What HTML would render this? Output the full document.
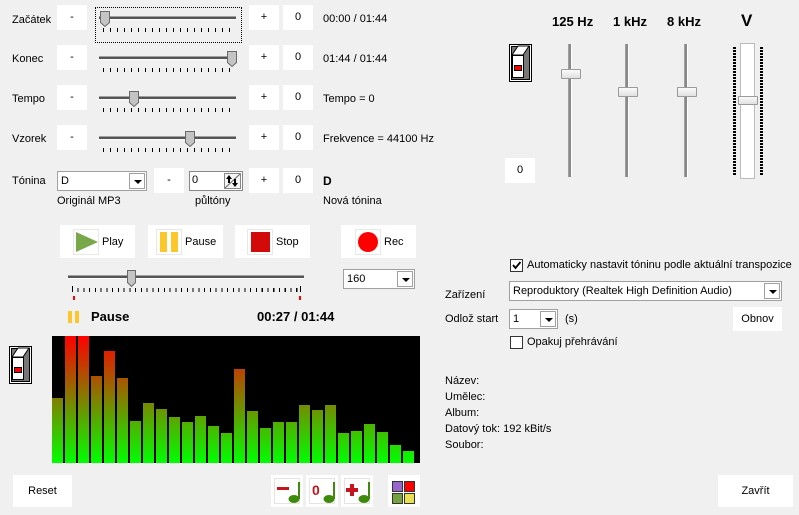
<!DOCTYPE html>
<html><head><meta charset="utf-8"><style>
*{margin:0;padding:0;box-sizing:border-box}
body{width:799px;height:515px;background:#f0f0f0;font-family:"Liberation Sans",sans-serif;font-size:11px;color:#000;position:relative;overflow:hidden}
.a{position:absolute}
.t{position:absolute;white-space:nowrap;line-height:12px}
.btn{position:absolute;background:#fff;text-align:center}
.box{position:absolute;background:#fff;text-align:center;width:30px;height:25px;line-height:25px}
.trk{position:absolute;height:4px;border-top:1px solid #a0a0a0;border-bottom:1px solid #fff;background:#555;}
.ticks{position:absolute;height:4px;background:repeating-linear-gradient(90deg,#000 0 1px,transparent 1px 7px)}
.thumb{position:absolute;width:10px;height:18px}
.combo{position:absolute;background:#fff;border:1px solid #a0a0a0;height:20px;line-height:18px;padding-left:3px}
.arr{position:absolute;right:1px;top:1px;width:16px;height:16px;border:1px solid #a0a0a0;background:#fff}
.arr:after{content:"";position:absolute;left:4px;top:6px;border-left:4px solid transparent;border-right:4px solid transparent;border-top:4px solid #000}
.vt{position:absolute;width:4px;background:#888;border-left:1px solid #a0a0a0;border-right:1px solid #fff}
.vth{position:absolute;width:20px;height:10px;background:linear-gradient(#fafafa,#e0e0e0);border:1px solid #9a9a9a;border-radius:1px}
.bar{position:absolute;width:11px;background:linear-gradient(to top,#00ff00,#ff0000);background-size:11px 127px;background-position:bottom}
.chk{position:absolute;width:13px;height:13px;border:1px solid #333;background:#fff}
</style></head><body>

<!-- slider rows -->
<div class="t" style="left:12px;top:14px">Začátek</div>
<div class="t" style="left:12px;top:53px">Konec</div>
<div class="t" style="left:12px;top:93px">Tempo</div>
<div class="t" style="left:12px;top:133px">Vzorek</div>

<div class="box" style="left:57px;top:5px">-</div>
<div class="box" style="left:57px;top:45px">-</div>
<div class="box" style="left:57px;top:85px">-</div>
<div class="box" style="left:57px;top:125px">-</div>
<div class="box" style="left:249px;top:5px">+</div>
<div class="box" style="left:249px;top:45px">+</div>
<div class="box" style="left:249px;top:85px">+</div>
<div class="box" style="left:249px;top:125px">+</div>
<div class="box" style="left:283px;top:5px">0</div>
<div class="box" style="left:283px;top:45px">0</div>
<div class="box" style="left:283px;top:85px">0</div>
<div class="box" style="left:283px;top:125px">0</div>

<div class="a" style="left:95px;top:7px;width:147px;height:36px;border:1px dotted #000"></div>

<svg class="a" style="left:95px;top:5px" width="150" height="150">
<g fill="#c8c8c8" stroke="#777">
</g>
</svg>
<div class="trk" style="left:99px;top:16px;width:137px"></div>
<div class="trk" style="left:99px;top:56px;width:137px"></div>
<div class="trk" style="left:99px;top:96px;width:137px"></div>
<div class="trk" style="left:99px;top:136px;width:137px"></div>
<div class="ticks" style="left:103px;top:28px;width:132px"></div>
<div class="ticks" style="left:103px;top:68px;width:132px"></div>
<div class="ticks" style="left:103px;top:108px;width:132px"></div>
<div class="ticks" style="left:103px;top:148px;width:132px"></div>
<svg class="a" style="left:0;top:0" width="300" height="160">
<g fill="#c4c4c4" stroke="#6a6a6a" stroke-width="1">
<path d="M100.5 11.5h9v11l-4.5 4l-4.5-4z"/>
<path d="M227.5 51.5h9v11l-4.5 4l-4.5-4z"/>
<path d="M129.5 91.5h9v11l-4.5 4l-4.5-4z"/>
<path d="M185.5 131.5h9v11l-4.5 4l-4.5-4z"/>
</g></svg>

<div class="t" style="left:323px;top:13px">00:00 / 01:44</div>
<div class="t" style="left:323px;top:53px">01:44 / 01:44</div>
<div class="t" style="left:323px;top:93px">Tempo = 0</div>
<div class="t" style="left:323px;top:133px">Frekvence = 44100 Hz</div>

<!-- tonina -->
<div class="t" style="left:12px;top:175px">Tónina</div>
<div class="combo" style="left:57px;top:171px;width:90px">D<div class="arr"></div></div>
<div class="box" style="left:154px;top:168px">-</div>
<div class="a" style="left:189px;top:171px;width:54px;height:20px;background:#fff;border:1px solid #888;padding-left:2px;line-height:17px">0
<svg class="a" style="right:1px;top:1px" width="17" height="16"><rect x="0.5" y="0.5" width="16" height="15" fill="#f4f4f4" stroke="#888"/><path d="M1 15L16 1" stroke="#666"/><path d="M5 2l-3 4h2v4h2v-4h2z M11 14l3-4h-2v-4h-2v4h-2z" fill="#000"/></svg></div>
<div class="box" style="left:249px;top:168px">+</div>
<div class="box" style="left:283px;top:168px">0</div>
<div class="t" style="left:323px;top:175px;font-weight:bold;font-size:12px">D</div>
<div class="t" style="left:57px;top:195px">Originál MP3</div>
<div class="t" style="left:195px;top:195px">půltóny</div>
<div class="t" style="left:323px;top:195px">Nová tónina</div>

<!-- transport -->
<div class="btn" style="left:60px;top:225px;width:75px;height:33px"></div>
<div class="btn" style="left:148px;top:225px;width:75px;height:33px"></div>
<div class="btn" style="left:235px;top:225px;width:75px;height:33px"></div>
<div class="btn" style="left:341px;top:225px;width:75px;height:33px"></div>
<svg class="a" style="left:0;top:220px" width="430" height="45">
<rect x="73.5" y="9.5" width="25" height="25" fill="none" stroke="#e8e8e8"/>
<path d="M76 12v20l22-10z" fill="#79a84a"/>
<rect x="156.5" y="9.5" width="25" height="25" fill="none" stroke="#e8e8e8"/>
<rect x="160" y="12" width="7" height="20" fill="#fcc72a"/><rect x="171" y="12" width="7" height="20" fill="#fcc72a"/>
<rect x="247.5" y="9.5" width="25" height="25" fill="none" stroke="#e8e8e8"/>
<rect x="251" y="12" width="19" height="20" fill="#d20a0a"/>
<rect x="355.5" y="9.5" width="25" height="25" fill="none" stroke="#e8e8e8"/>
<circle cx="368" cy="22" r="10" fill="#ff0000"/>
</svg>
<div class="t" style="left:102px;top:236px">Play</div>
<div class="t" style="left:185px;top:236px">Pause</div>
<div class="t" style="left:276px;top:236px">Stop</div>
<div class="t" style="left:384px;top:236px">Rec</div>

<div class="trk" style="left:68px;top:275px;width:236px"></div>
<div class="ticks" style="left:72px;top:288px;width:230px;background:repeating-linear-gradient(90deg,#000 0 1px,transparent 1px 5.75px)"></div>
<svg class="a" style="left:0;top:260px" width="320" height="45">
<path d="M127.5 10.5h8v12l-4 4l-4-4z" fill="#c4c4c4" stroke="#6a6a6a"/>
<rect x="72" y="26" width="1" height="6" fill="#000"/><rect x="300" y="26" width="1" height="6" fill="#000"/>
<rect x="73" y="36" width="2" height="4" fill="#f00"/><rect x="299" y="36" width="2" height="4" fill="#f00"/>
</svg>
<div class="combo" style="left:343px;top:269px;width:72px">160<div class="arr"></div></div>

<div class="a" style="left:68px;top:311px;width:4px;height:12px;background:#fcc72a"></div>
<div class="a" style="left:75px;top:311px;width:4px;height:12px;background:#fcc72a"></div>
<div class="t" style="left:91px;top:311px;font-weight:bold;font-size:13px">Pause</div>
<div class="t" style="left:257px;top:311px;font-weight:bold;font-size:13px">00:27 / 01:44</div>

<!-- spectrum -->
<div class="a" style="left:52px;top:336px;width:368px;height:127px;background:#000">
<div class="bar" style="left:0px;top:62px;bottom:0"></div>
<div class="bar" style="left:13px;top:0;bottom:0"></div>
<div class="bar" style="left:26px;top:0;bottom:0"></div>
<div class="bar" style="left:39px;top:40px;bottom:0"></div>
<div class="bar" style="left:52px;top:15px;bottom:0"></div>
<div class="bar" style="left:65px;top:42px;bottom:0"></div>
<div class="bar" style="left:78px;top:85px;bottom:0"></div>
<div class="bar" style="left:91px;top:67px;bottom:0"></div>
<div class="bar" style="left:104px;top:73px;bottom:0"></div>
<div class="bar" style="left:117px;top:81px;bottom:0"></div>
<div class="bar" style="left:130px;top:86px;bottom:0"></div>
<div class="bar" style="left:143px;top:80px;bottom:0"></div>
<div class="bar" style="left:156px;top:90px;bottom:0"></div>
<div class="bar" style="left:169px;top:97px;bottom:0"></div>
<div class="bar" style="left:182px;top:33px;bottom:0"></div>
<div class="bar" style="left:195px;top:75px;bottom:0"></div>
<div class="bar" style="left:208px;top:92px;bottom:0"></div>
<div class="bar" style="left:221px;top:86px;bottom:0"></div>
<div class="bar" style="left:234px;top:86px;bottom:0"></div>
<div class="bar" style="left:247px;top:69px;bottom:0"></div>
<div class="bar" style="left:260px;top:74px;bottom:0"></div>
<div class="bar" style="left:273px;top:69px;bottom:0"></div>
<div class="bar" style="left:286px;top:97px;bottom:0"></div>
<div class="bar" style="left:299px;top:95px;bottom:0"></div>
<div class="bar" style="left:312px;top:88px;bottom:0"></div>
<div class="bar" style="left:325px;top:96px;bottom:0"></div>
<div class="bar" style="left:338px;top:109px;bottom:0"></div>
<div class="bar" style="left:351px;top:115px;bottom:0"></div>
</div>

<!-- switch icons -->
<svg class="a" style="left:8px;top:345px" width="26" height="40">
<rect x="1.5" y="1.5" width="22" height="37" fill="#fff" stroke="#000"/>
<rect x="3.5" y="3.5" width="18" height="33" fill="#777" stroke="#000"/>
<path d="M4 12l6-9h11l-6 9z" fill="#fff" stroke="#000"/>
<rect x="4.5" y="12.5" width="11" height="22" fill="#fff" stroke="#000"/>
<rect x="6.5" y="22.5" width="7" height="5" fill="#f00" stroke="#000"/>
</svg>
<svg class="a" style="left:508px;top:43px" width="26" height="40">
<rect x="1.5" y="1.5" width="22" height="37" fill="#fff" stroke="#000"/>
<rect x="3.5" y="3.5" width="18" height="33" fill="#777" stroke="#000"/>
<path d="M4 12l6-9h11l-6 9z" fill="#fff" stroke="#000"/>
<rect x="4.5" y="12.5" width="11" height="22" fill="#fff" stroke="#000"/>
<rect x="6.5" y="22.5" width="7" height="5" fill="#f00" stroke="#000"/>
</svg>

<!-- bottom buttons -->
<div class="btn" style="left:13px;top:475px;width:59px;height:32px;line-height:32px">Reset</div>
<div class="btn" style="left:271px;top:475px;width:32px;height:32px"></div>
<div class="btn" style="left:306px;top:475px;width:32px;height:32px"></div>
<div class="btn" style="left:341px;top:475px;width:32px;height:32px"></div>
<div class="btn" style="left:388px;top:475px;width:32px;height:32px"></div>
<svg class="a" style="left:270px;top:474px" width="160" height="36">
<g fill="none" stroke="#e4e4e4"><rect x="4.5" y="4.5" width="25" height="25"/><rect x="39.5" y="4.5" width="25" height="25"/><rect x="74.5" y="4.5" width="25" height="25"/></g>
<g fill="#3f8a0a"><ellipse cx="24" cy="25" rx="5.5" ry="4"/><rect x="28" y="8" width="2" height="17"/>
<ellipse cx="59" cy="25" rx="5.5" ry="4"/><rect x="63" y="8" width="2" height="17"/>
<ellipse cx="94" cy="25" rx="5.5" ry="4"/><rect x="98" y="8" width="2" height="17"/></g>
<rect x="7" y="13" width="12" height="3" fill="#c8141e"/>
<text x="42" y="21" font-family="Liberation Sans" font-weight="bold" font-size="14" fill="#c8141e">0</text>
<path d="M80 10h4v4h4v4h-4v4h-4v-4h-4v-4h4z" fill="#c8141e"/>
<rect x="122.5" y="7.5" width="10" height="10" fill="#9966cc" stroke="#333"/>
<rect x="134.5" y="7.5" width="10" height="10" fill="#ff0000" stroke="#333"/>
<rect x="122.5" y="19.5" width="10" height="10" fill="#77a040" stroke="#333"/>
<rect x="134.5" y="19.5" width="10" height="10" fill="#e8e050" stroke="#333"/>
</svg>

<!-- EQ -->
<div class="t" style="left:552px;top:16px;font-weight:bold;font-size:13px">125 Hz</div>
<div class="t" style="left:613px;top:16px;font-weight:bold;font-size:13px">1 kHz</div>
<div class="t" style="left:667px;top:16px;font-weight:bold;font-size:13px">8 kHz</div>
<div class="t" style="left:741px;top:12px;font-weight:bold;font-size:17px;line-height:18px">V</div>
<div class="box" style="left:505px;top:158px">0</div>
<div class="vt" style="left:568px;top:44px;height:133px"></div>
<div class="vt" style="left:625px;top:44px;height:133px"></div>
<div class="vt" style="left:684px;top:44px;height:133px"></div>
<div class="vth" style="left:561px;top:69px"></div>
<div class="vth" style="left:618px;top:87px"></div>
<div class="vth" style="left:677px;top:87px"></div>
<div class="a" style="left:733px;top:47px;width:3px;height:128px;background:repeating-linear-gradient(#000 0 2px,transparent 2px 3px)"></div>
<div class="a" style="left:760px;top:47px;width:3px;height:128px;background:repeating-linear-gradient(#000 0 2px,transparent 2px 3px)"></div>
<div class="a" style="left:740px;top:43px;width:15px;height:136px;background:#fff;border:1px solid #bbb"></div>
<div class="vth" style="left:738px;top:96px;height:9px"></div>

<!-- right settings -->
<div class="chk" style="left:510px;top:259px"></div>
<svg class="a" style="left:510px;top:259px" width="13" height="13"><path d="M3 6l2.5 3l5-6" stroke="#000" stroke-width="1.8" fill="none"/></svg>
<div class="t" style="left:527px;top:259px">Automaticky nastavit tóninu podle aktuální transpozice</div>
<div class="t" style="left:445px;top:289px">Zařízení</div>
<div class="combo" style="left:509px;top:281px;width:273px">Reproduktory (Realtek High Definition Audio)<div class="arr"></div></div>
<div class="t" style="left:445px;top:313px">Odlož start</div>
<div class="combo" style="left:509px;top:309px;width:49px">1<div class="arr"></div></div>
<div class="t" style="left:565px;top:313px">(s)</div>
<div class="btn" style="left:733px;top:307px;width:49px;height:24px;line-height:24px">Obnov</div>
<div class="chk" style="left:510px;top:336px"></div>
<div class="t" style="left:527px;top:336px">Opakuj přehrávání</div>

<div class="t" style="left:445px;top:375px">Název:</div>
<div class="t" style="left:445px;top:391px">Umělec:</div>
<div class="t" style="left:445px;top:407px">Album:</div>
<div class="t" style="left:445px;top:423px">Datový tok: 192 kBit/s</div>
<div class="t" style="left:445px;top:439px">Soubor:</div>

<div class="btn" style="left:718px;top:475px;width:75px;height:32px;line-height:32px">Zavřít</div>
</body></html>
